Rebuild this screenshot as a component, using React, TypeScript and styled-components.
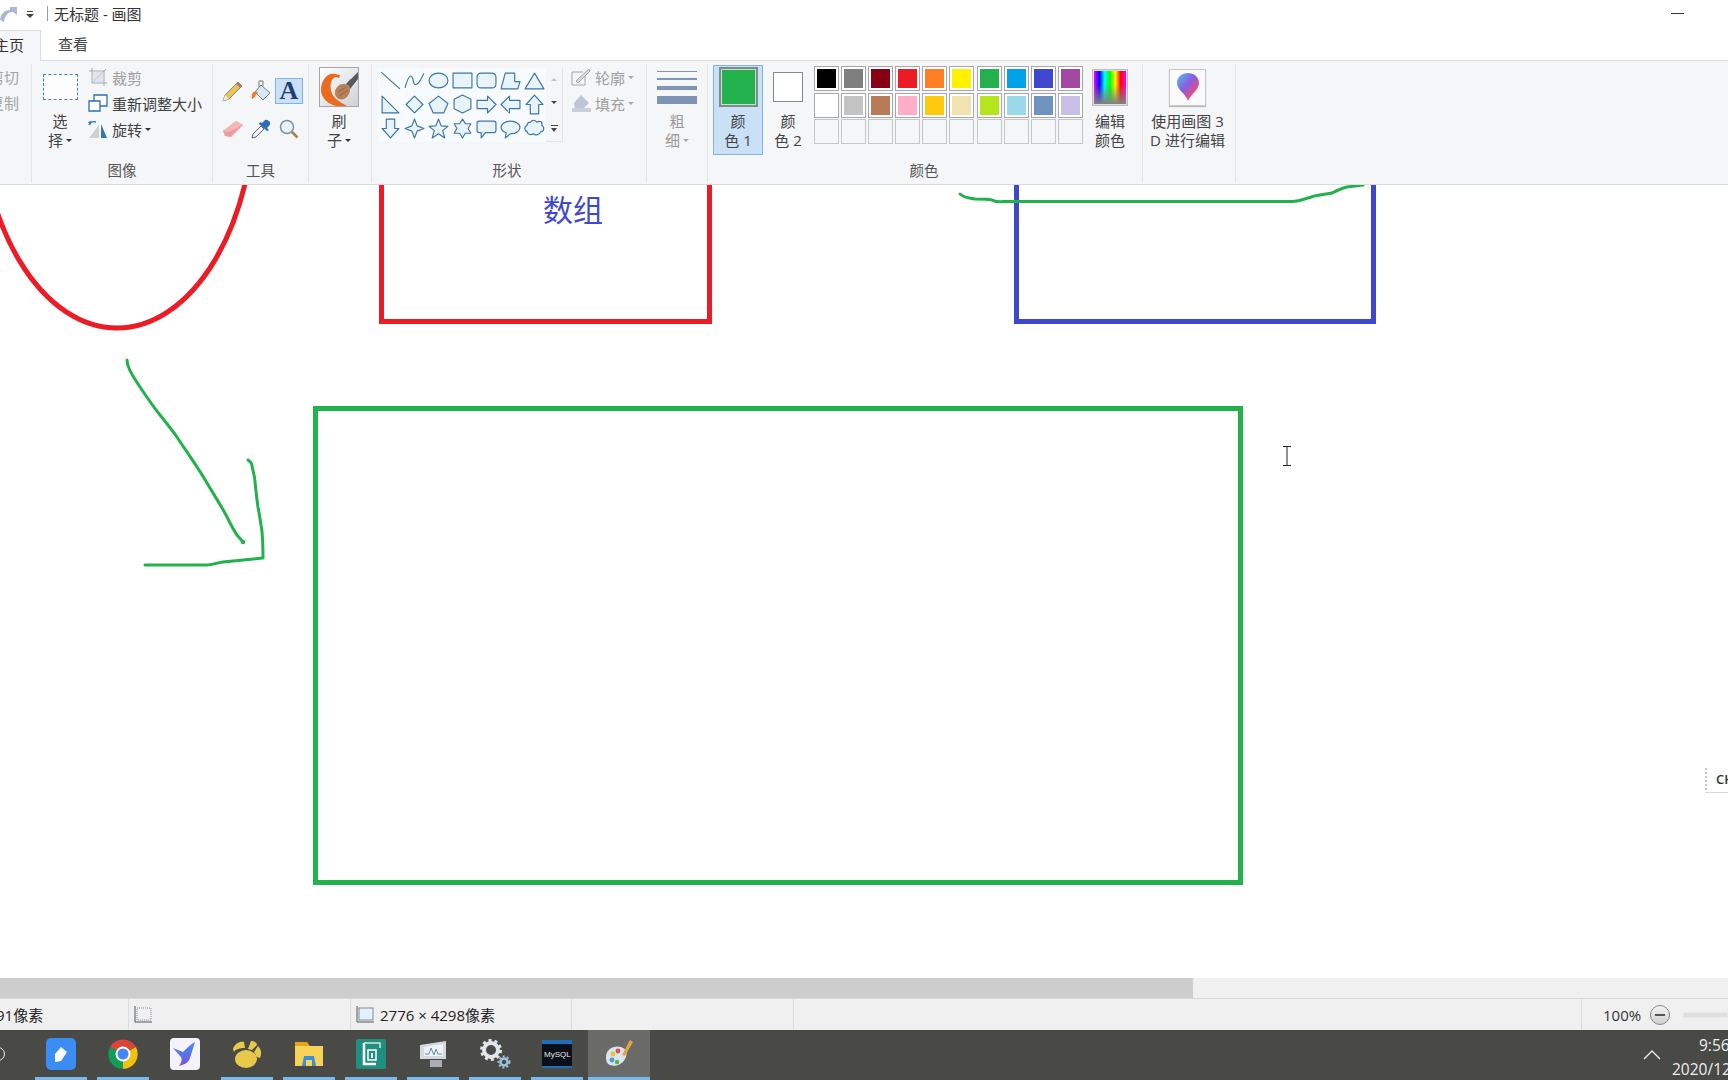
import React from "react";
import styled, { createGlobalStyle } from "styled-components";

const GlobalStyle = createGlobalStyle`
  html, body {
    margin: 0;
    height: 100%;
    overflow: hidden;
    background: #fff;
  }
  body {
    font-family: "Open Sans", "Noto Sans CJK SC", sans-serif;
    font-size: 15px;
    color: #3a3a3a;
  }
`;

const Page = styled.div`
  width: 1728px;
  height: 1080px;
  display: flex;
  flex-direction: column;
  overflow: hidden;
`;

/* title bar */
const TitleBar = styled.div`
  height: 30px;
  flex: none;
  box-sizing: border-box;
  padding-bottom: 3px;
  display: flex;
  align-items: center;
  background: #fff;
`;
const QuickCaret = styled.span`
  width: 0;
  height: 0;
  margin: 5px 13px 0 9px;
  border-left: 4px solid transparent;
  border-right: 4px solid transparent;
  border-top: 4px solid #444;
  position: relative;
  &::before {
    content: "";
    position: absolute;
    left: -3px;
    top: -7px;
    width: 6px;
    height: 1px;
    background: #444;
  }
`;
const TitleDivider = styled.span`
  width: 1px;
  height: 15px;
  background: #9a9a9a;
  margin-right: 6px;
`;
const TitleText = styled.span`
  font-size: 15px;
  color: #333;
`;
const Minimize = styled.span`
  width: 13px;
  height: 1px;
  background: #333;
  margin-left: auto;
  margin-right: 44px;
`;

/* tabs */
const TabRow = styled.div`
  height: 31px;
  flex: none;
  display: flex;
  background: #fff;
  border-bottom: 1px solid #dadbdc;
  box-sizing: border-box;
`;
const HomeTab = styled.div`
  width: 41px;
  height: 31px;
  box-sizing: border-box;
  background: #f5f6f7;
  border-right: 1px solid #dadbdc;
  border-top: 1px solid #dadbdc;
  display: flex;
  justify-content: flex-end;
  align-items: center;
  padding: 0 16px 3px 0;
  white-space: nowrap;
  overflow: hidden;
  color: #333;
`;
const ViewTab = styled.div`
  margin-left: 17px;
  line-height: 28px;
  color: #444;
`;

/* ribbon */
const Ribbon = styled.div`
  height: 124px;
  flex: none;
  display: flex;
  background: #f5f6f7;
  border-bottom: 1px solid #dadbdc;
  box-sizing: border-box;
`;
const Group = styled.section<{ $w: number }>`
  width: ${(p) => p.$w}px;
  flex: none;
  display: flex;
  flex-direction: column;
  box-sizing: border-box;
  border-right: 1px solid #e3e4e6;
  margin: 3px 0 1px;
  overflow: hidden;
`;
const GroupBody = styled.div`
  height: 95px;
  display: flex;
`;
const GroupLabel = styled.div<{ $nudge?: number }>`
  height: 25px;
  line-height: 25px;
  text-align: center;
  color: #555;
  font-size: 14.5px;
  padding-right: ${(p) => p.$nudge || 0}px;
`;

const ClippedColumn = styled.div`
  width: 32px;
  display: flex;
  flex-direction: column;
  align-items: flex-end;
  padding: 0 13px 0 0;
  box-sizing: border-box;
  white-space: nowrap;
  color: #a5a5a5;
`;
const ClippedRow = styled.div`
  height: 26px;
  line-height: 26px;
  flex: none;
`;

const LargeButton = styled.div<{ $w: number; $selected?: boolean; $muted?: boolean; $inset?: number }>`
  width: ${(p) => p.$w}px;
  height: 90px;
  flex: none;
  box-sizing: border-box;
  margin: 1px 0 0 ${(p) => p.$inset || 0}px;
  border: 1px solid ${(p) => (p.$selected ? "#7fb4e6" : "transparent")};
  background: ${(p) => (p.$selected ? "#c9e0f7" : "transparent")};
  color: ${(p) => (p.$muted ? "#9a9a9a" : "#444")};
  display: flex;
  flex-direction: column;
  align-items: center;
`;
const IconArea = styled.div`
  height: 46px;
  padding-bottom: 4px;
  box-sizing: border-box;
  display: flex;
  align-items: center;
  justify-content: center;
`;
const ButtonLine = styled.div`
  height: 19px;
  line-height: 19px;
  white-space: nowrap;
  display: flex;
  align-items: center;
  gap: 3px;
`;
const Caret = styled.span<{ $muted?: boolean }>`
  width: 0;
  height: 0;
  border-left: 3px solid transparent;
  border-right: 3px solid transparent;
  border-top: 3px solid ${(p) => (p.$muted ? "#aaa" : "#333")};
`;
const SelectBox = styled.div`
  width: 35px;
  height: 26px;
  box-sizing: border-box;
  border: 1px dashed #4d7fb5;
  background: #fdfdfd;
`;

const SideList = styled.div`
  display: flex;
  flex-direction: column;
`;
const SideRow = styled.div<{ $muted?: boolean }>`
  height: 26px;
  display: flex;
  align-items: center;
  gap: 3px;
  white-space: nowrap;
  color: ${(p) => (p.$muted ? "#a0a0a0" : "#3f3f3f")};
  svg {
    margin-right: 1px;
  }
`;

const ToolGrid = styled.div`
  display: grid;
  grid-template-columns: repeat(3, 28px);
  grid-template-rows: repeat(2, 26px);
  row-gap: 12px;
  padding: 14px 0 0 6px;
`;
const Tool = styled.div<{ $active?: boolean }>`
  display: flex;
  align-items: center;
  justify-content: center;
  box-sizing: border-box;
  border: 1px solid ${(p) => (p.$active ? "#7fb4e6" : "transparent")};
  background: ${(p) => (p.$active ? "#c9e0f7" : "transparent")};
`;
const TextToolGlyph = styled.span`
  font-family: "Liberation Serif", serif;
  font-weight: 700;
  font-size: 26px;
  line-height: 24px;
  color: #1f3f70;
`;
const BrushFrame = styled.div`
  width: 40px;
  height: 40px;
  box-sizing: border-box;
  border: 1px solid #a6a6a6;
  background: #fff;
  display: flex;
`;

const Gallery = styled.div`
  margin: 4px 0 0 6px;
  width: 168px;
  height: 74px;
  display: grid;
  grid-template-columns: repeat(7, 24px);
  grid-auto-rows: 24px;
  background: #f8fbfe;
`;
const ShapeCell = styled.div`
  display: flex;
  align-items: center;
  justify-content: center;
`;
const GalleryScroll = styled.div`
  width: 17px;
  height: 74px;
  margin-top: 4px;
  box-sizing: border-box;
  border-bottom: 1px solid #e4e4e4;
  border-right: 1px solid #e4e4e4;
  display: flex;
  flex-direction: column;
  align-items: center;
  justify-content: space-around;
`;
const ScrollUp = styled.span`
  width: 0;
  height: 0;
  border-left: 3px solid transparent;
  border-right: 3px solid transparent;
  border-bottom: 3px solid #c4c4c4;
`;
const ScrollDown = styled.span`
  width: 0;
  height: 0;
  border-left: 3px solid transparent;
  border-right: 3px solid transparent;
  border-top: 3px solid #444;
`;
const ScrollMore = styled.span`
  width: 7px;
  height: 5px;
  border-top: 1px solid #444;
  position: relative;
  &::after {
    content: "";
    position: absolute;
    left: 0;
    top: 2px;
    border-left: 3.5px solid transparent;
    border-right: 3.5px solid transparent;
    border-top: 4px solid #444;
  }
`;
const ShapeOptions = styled.div`
  padding: 0 0 0 8px;
  display: flex;
  flex-direction: column;
`;

const SizeBars = styled.div`
  width: 40px;
  display: flex;
  flex-direction: column;
  gap: 6px;
`;
const SizeBar = styled.div<{ $h: number }>`
  height: ${(p) => p.$h}px;
  background: #7f94b5;
`;

const Swatch = styled.div<{ $large?: boolean; $color: string }>`
  width: ${(p) => (p.$large ? 39 : 30)}px;
  height: ${(p) => (p.$large ? 40 : 30)}px;
  box-sizing: border-box;
  border: ${(p) => (p.$large ? 2 : 1)}px solid #7f8c8c;
  background: ${(p) => p.$color};
  box-shadow: inset 0 0 0 1px ${(p) => (p.$large ? "#c9dccb" : "#fff")};
`;
const Palette = styled.div`
  margin: 2px 0 0 1px;
  display: grid;
  grid-template-columns: repeat(10, 27.1px);
  grid-auto-rows: 26.6px;
`;
const PaletteCell = styled.div<{ $color?: string }>`
  width: 25px;
  height: 25px;
  box-sizing: border-box;
  border: 1px solid ${(p) => (p.$color ? "#a8a8a8" : "#c6c6c6")};
  background: ${(p) => p.$color || "transparent"};
  box-shadow: ${(p) => (p.$color ? "inset 0 0 0 2px #fff" : "none")};
`;
const Spectrum = styled.div`
  width: 36px;
  height: 37px;
  box-sizing: border-box;
  border: 2px solid #dedede;
  outline: 1px solid #bdbdbd;
  outline-offset: -1px;
  background:
    linear-gradient(to bottom, rgba(128, 128, 128, 0) 40%, rgba(128, 128, 128, 1)),
    linear-gradient(to right, #f0f, #00f, #0ff, #0f0, #ff0, #f00, #f0f);
`;
const Paint3DFrame = styled.div`
  width: 37px;
  height: 37px;
  box-sizing: border-box;
  border: 1px solid #c8c8c8;
  box-shadow: 0 1px 1px #bbb;
  background: #fafafa;
  display: flex;
  align-items: center;
  justify-content: center;
`;

/* canvas */
const Canvas = styled.main`
  position: relative;
  flex: 1;
  background: #fff;
  overflow: hidden;
`;
const Drawing = styled.svg`
  display: block;
`;
const CanvasText = styled.div`
  position: absolute;
  left: 543px;
  top: 1px;
  font-family: "Noto Sans CJK SC", sans-serif;
  font-size: 30px;
  line-height: 44px;
  color: #3f48cc;
`;
const ImeBar = styled.div`
  position: absolute;
  right: 0;
  top: 580px;
  width: 23px;
  height: 27px;
  border-bottom: 1px solid #d8d8d8;
  background: #fff;
  display: flex;
  align-items: center;
  gap: 9px;
  overflow: hidden;
`;
const ImeGrip = styled.span`
  flex: none;
  width: 0;
  height: 22px;
  border-left: 2px dotted #c4c4c4;
`;
const ImeText = styled.span`
  font-size: 13px;
  font-weight: 600;
  color: #333;
`;
const Cursor = styled.svg`
  position: absolute;
  left: 1282px;
  top: 261px;
`;

const HScroll = styled.div`
  height: 20px;
  flex: none;
  background: #f0f0f0;
`;
const HThumb = styled.div`
  width: 1193px;
  height: 100%;
  background: #cdcdcd;
`;

/* status bar */
const StatusBar = styled.footer`
  height: 32px;
  flex: none;
  box-sizing: border-box;
  border-top: 1px solid #d9d9d9;
  background: #f0f0f0;
  display: flex;
  color: #222;
`;
const StatusCell = styled.div<{ $w: number }>`
  width: ${(p) => p.$w}px;
  flex: none;
  box-sizing: border-box;
  border-right: 1px solid #dcdcdc;
  display: flex;
  align-items: center;
  gap: 5px;
  padding-left: 4px;
  white-space: nowrap;
  overflow: hidden;
`;
const ClippedStatus = styled.span`
  margin-left: -8px;
`;
const ZoomArea = styled.div`
  flex: 1;
  display: flex;
  align-items: center;
  padding-left: 21px;
  color: #333;
`;
const ZoomButton = styled.span`
  width: 20px;
  height: 20px;
  box-sizing: border-box;
  margin-left: 9px;
  border: 1px solid #8a8a8a;
  border-radius: 50%;
  background: linear-gradient(#f4f4f4, #cfcfcf);
  display: flex;
  align-items: center;
  justify-content: center;
  &::before {
    content: "";
    width: 10px;
    height: 2px;
    background: #555;
  }
`;
const ZoomTrack = styled.span`
  flex: 1;
  height: 4px;
  margin-left: 13px;
  background: #dfdfdf;
  border: 1px solid #e8e8e8;
`;

/* taskbar */
const Taskbar = styled.nav`
  height: 50px;
  flex: none;
  display: flex;
  align-items: stretch;
  background: #494946;
  color: #eee;
`;
const SearchRing = styled.span`
  width: 14px;
  height: 14px;
  margin: 17px 25px 0 -9px;
  box-sizing: border-box;
  border: 1.5px solid #eee;
  border-radius: 50%;
`;
const TaskItem = styled.div<{ $running?: boolean; $active?: boolean }>`
  width: 62px;
  flex: none;
  box-sizing: border-box;
  padding-bottom: 3px;
  display: flex;
  align-items: center;
  justify-content: center;
  background: ${(p) => (p.$active ? "#6a6a68" : "transparent")};
  position: relative;
  &::after {
    content: "";
    display: ${(p) => (p.$running ? "block" : "none")};
    position: absolute;
    bottom: 0;
    left: ${(p) => (p.$active ? 0 : 5)}px;
    right: ${(p) => (p.$active ? 0 : 5)}px;
    height: 3px;
    background: #76b9ed;
  }
`;
const TrayChevron = styled.svg`
  margin: 0 11px 0 auto;
  align-self: center;
`;
const Clock = styled.div`
  width: 56px;
  flex: none;
  padding-top: 3px;
  font-size: 15.5px;
  line-height: 24px;
  white-space: nowrap;
`;
const ClockTime = styled.div`
  padding-left: 27px;
`;

const SHAPES = [
  "M1 2L19 18",
  "M1 17C5 2 8 4 9 11C10 17 14 14 19 3",
  "M1 10C1 6 5 3 10 3S19 6 19 10S15 17 10 17S1 14 1 10Z",
  "M1 3H19V17H1Z",
  "M5 3H15Q19 3 19 7V13Q19 17 15 17H5Q1 17 1 13V7Q1 3 5 3Z",
  "M5 3H14V11H19L17 18H1Z",
  "M10 3L19 18H1Z",
  "M2 2V18H18Z",
  "M10 2L18 10L10 18L2 10Z",
  "M10 2L19 9L15 18H5L1 9Z",
  "M10 1L18 5V14L10 18L2 14V5Z",
  "M1 6H11V2L19 10L11 18V14H1Z",
  "M19 6H9V2L1 10L9 18V14H19Z",
  "M10 1L18 10H14V19H6V10H2Z",
  "M6 1H14V10H18L10 19L2 10H6Z",
  "M10 1L12.5 7.5L19 10L12.5 12.5L10 19L7.5 12.5L1 10L7.5 7.5Z",
  "M10 1L12.5 7.5L19 8L14 12L16 19L10 15L4 19L6 12L1 8L7.5 7.5Z",
  "M10 1L12.7 5.5L18 5.5L15.3 10L18 14.5L12.7 14.5L10 19L7.3 14.5L2 14.5L4.7 10L2 5.5L7.3 5.5Z",
  "M3 3H17Q19 3 19 5V12Q19 14 17 14H9L5 19V14H3Q1 14 1 12V5Q1 3 3 3Z",
  "M10 3C15 3 19 5.5 19 9S15 15 10 15L5 19L6 14C3 13 1 11 1 9C1 5.5 5 3 10 3Z",
  "M6 4C8 1 11 2 12 4C15 2 18 4 17 7C20 9 19 13 16 13C15 16 11 17 9 15C6 17 3 15 3 13C0 12 0 8 3 7C3 5 4 4 6 4Z",
];

const PALETTE = [
  "#000000", "#7f7f7f", "#880015", "#ed1c24", "#ff7f27", "#fff200", "#22b14c", "#00a2e8", "#3f48cc", "#a349a4",
  "#ffffff", "#c3c3c3", "#b97a57", "#ffaec9", "#ffc90e", "#efe4b0", "#b5e61d", "#99d9ea", "#7092be", "#c8bfe7",
];

const RedoIcon = () => (
  <svg width="17" height="18" viewBox="0 0 17 18">
    <path d="M0 15C1 8 5 5 10 5V2L17 2V10L13 7C8 7 5 10 4 17Z" fill="#aab8d0" />
  </svg>
);
const CropIcon = () => (
  <svg width="20" height="20" viewBox="0 0 20 20" fill="none" stroke="#a6a6b4">
    <path d="M4 1V16H19M1 4H16V19" />
    <path d="M5 15L18 2" />
    <path d="M5 5H15V15H5Z" fill="#d9dbe6" stroke="none" opacity="0.7" />
  </svg>
);
const ResizeIcon = () => (
  <svg width="20" height="18" viewBox="0 0 20 18" fill="#fff" stroke="#2f6fb0" strokeWidth="1.3">
    <path d="M6 1H19V12H6Z" />
    <path d="M1 7H12V17H1Z" />
  </svg>
);
const RotateIcon = () => (
  <svg width="20" height="20" viewBox="0 0 20 20">
    <path d="M11 6V19H1Z" fill="#d0d0d0" />
    <path d="M13 5L19 19H13Z" fill="#2f78b8" />
    <path d="M1 6C2 3 5 2 8 3" fill="none" stroke="#2f78b8" strokeWidth="1.4" />
    <path d="M0 3L3 2L3 6Z" fill="#2f78b8" />
  </svg>
);
const PencilIcon = () => (
  <svg width="22" height="22" viewBox="0 0 22 22">
    <path d="M1 21L3 15L16 2L20 6L7 19Z" fill="#e9c65a" stroke="#77705a" strokeWidth="0.8" />
    <path d="M1 21L3 15L7 19Z" fill="#f2e6cf" />
    <path d="M16 2L20 6L18 8L14 4Z" fill="#a98078" />
  </svg>
);
const FillIcon = () => (
  <svg width="22" height="22" viewBox="0 0 22 22">
    <path d="M11 5L20 13L13 20L5 12Z" fill="#d9e6f4" stroke="#6a7f9a" />
    <path d="M6 11C2 12 1 15 2 19C4 19 5 15 8 13Z" fill="#f0792a" />
    <path d="M9 7V1H13V6" fill="none" stroke="#777" />
  </svg>
);
const EraserIcon = () => (
  <svg width="22" height="20" viewBox="0 0 22 20">
    <path d="M1 12L14 2L21 6L9 18L3 17Z" fill="#ee9a9e" />
    <path d="M1 12L14 2L21 6L7 13Z" fill="#f4b6b8" />
  </svg>
);
const DropperIcon = () => (
  <svg width="22" height="22" viewBox="0 0 22 22">
    <path d="M2 20L3 16L11 8L14 11L6 19Z" fill="#eef" stroke="#667" />
    <path d="M12 5L15 2Q17 1 20 4Q21 6 19 8L17 10L19 12L17 13L9 6L10 4Z" fill="#2a6fb0" />
  </svg>
);
const MagnifierIcon = () => (
  <svg width="20" height="20" viewBox="0 0 20 20" fill="none">
    <circle cx="8" cy="8" r="6.5" fill="#eaf3fb" stroke="#8a8f98" strokeWidth="1.5" />
    <path d="M13 13L18.5 18.5" stroke="#9a8560" strokeWidth="2.5" />
  </svg>
);
const BrushIcon = () => (
  <svg width="38" height="38" viewBox="0 0 38 38">
    <defs>
      <linearGradient id="brushBack" x1="0" y1="0" x2="1" y2="1">
        <stop offset="0" stopColor="#ffffff" />
        <stop offset="1" stopColor="#cfd2d4" />
      </linearGradient>
    </defs>
    <rect width="38" height="38" fill="url(#brushBack)" />
    <path d="M38 3L26 16L30 21L38 11Z" fill="#555a60" />
    <path d="M38 0L29 10L31 11L38 4Z" fill="#e8e8e8" />
    <path d="M15 6C8 4 1 12 1 22C1 30 8 36 16 38H27C20 34 12 30 11 22C10 15 11 11 16 9L19 10L20 7Z" fill="#ea6a20" />
    <path d="M15 23C17 17 23 14 28 17C32 20 30 28 24 31C19 33 14 29 15 23Z" fill="#b5835a" />
    <path d="M18 24L26 19M19 28L28 22" stroke="#8f6240" strokeWidth="1" />
  </svg>
);
const OutlineIcon = () => (
  <svg width="20" height="20" viewBox="0 0 20 20" fill="none" stroke="#a0a6b0">
    <path d="M1 5H12M1 5V18H14V9" />
    <path d="M5 14L18 2L19 4L7 16Z" fill="#d8dbe0" />
  </svg>
);
const FillOptionIcon = () => (
  <svg width="20" height="20" viewBox="0 0 20 20">
    <path d="M10 2L18 10L12 16H4L3 10Z" fill="#bcc6d6" />
    <rect x="1" y="15" width="19" height="4" fill="#c9d0dc" />
  </svg>
);
const Paint3DIcon = () => (
  <svg width="24" height="30" viewBox="0 0 24 30">
    <defs>
      <linearGradient id="paint3d" x1="0" y1="0" x2="1" y2="1">
        <stop offset="0" stopColor="#4fc3e8" />
        <stop offset="0.45" stopColor="#8a5ce0" />
        <stop offset="0.75" stopColor="#ec4f7c" />
        <stop offset="1" stopColor="#f6b02c" />
      </linearGradient>
    </defs>
    <path d="M12 1C18 1 23 5 23 11C23 18 15 22 12 29C10 22 1 18 1 11C1 5 6 1 12 1Z" fill="url(#paint3d)" />
  </svg>
);
const SelectionIcon = ({ filled }: { filled?: boolean }) => (
  <svg width="20" height="20" viewBox="0 0 20 20" fill="none">
    <path d="M2 1V17H19" stroke="#555" />
    <rect x="4" y="3" width="14" height="12" fill={filled ? "#e4f0fa" : "none"} stroke="#7a8aa0" strokeDasharray={filled ? undefined : "1 1"} />
  </svg>
);

const NoteIcon = () => (
  <svg width="30" height="32" viewBox="0 0 30 32">
    <rect width="30" height="32" rx="5" fill="#3b8cf5" />
    <path d="M9 24V16L15 9L21 14L15 23Z" fill="#fff" />
  </svg>
);
const ChromeIcon = () => (
  <svg width="30" height="30" viewBox="0 0 30 30">
    <path d="M15 15L2 8A15 15 0 0 1 28 8Z" fill="#db4437" />
    <path d="M15 15L28 8A15 15 0 0 1 15 30Z" fill="#f4c20d" />
    <path d="M15 15L15 30A15 15 0 0 1 2 8Z" fill="#0f9d58" />
    <circle cx="15" cy="15" r="7.5" fill="#fff" />
    <circle cx="15" cy="15" r="5.5" fill="#4285f4" />
  </svg>
);
const BirdIcon = () => (
  <svg width="30" height="32" viewBox="0 0 30 32">
    <defs>
      <linearGradient id="bird" x1="0" y1="0" x2="0" y2="1">
        <stop offset="0" stopColor="#3f8fe8" />
        <stop offset="1" stopColor="#7a54e0" />
      </linearGradient>
    </defs>
    <rect width="30" height="32" rx="4" fill="#f4f3fb" />
    <path d="M25 4L20 20C18 26 12 27 9 28C12 24 12 21 11 19L3 10L13 14C17 10 21 6 25 4Z" fill="url(#bird)" />
  </svg>
);
const PetalIcon = () => (
  <svg width="30" height="28" viewBox="0 0 30 28" fill="#e8c84a">
    <ellipse cx="14" cy="19" rx="11" ry="9" />
    <path d="M1 9C3 3 8 1 12 2L13 8C8 8 4 9 2 12Z" />
    <path d="M16 9L19 1C23 1 25 3 25 5L20 10Z" />
    <path d="M22 12L26 6C29 9 30 13 28 18L25 17Z" />
  </svg>
);
const FolderIcon = () => (
  <svg width="28" height="24" viewBox="0 0 28 24">
    <path d="M0 0H12L15 4H0Z" fill="#e5a41c" />
    <rect y="4" width="28" height="20" fill="#f7d358" />
    <path d="M7 24L9 14H19L21 24H17V18H11V24Z" fill="#3a8fd8" />
  </svg>
);
const ReaderIcon = () => (
  <svg width="30" height="30" viewBox="0 0 30 30" fill="none">
    <rect width="30" height="30" rx="2" fill="#1f8f80" />
    <path d="M8 4V25H20" stroke="#fff" strokeWidth="2.5" />
    <path d="M8 4H24V9" stroke="#cfe8e4" strokeWidth="1.5" />
    <path d="M12 11H20V21H12Z" stroke="#fff" strokeWidth="1.5" />
    <path d="M16 14V19" stroke="#fff" strokeWidth="2" />
  </svg>
);
const MonitorIcon = () => (
  <svg width="30" height="26" viewBox="0 0 30 26">
    <path d="M2 4L28 0V18L2 18Z" fill="#d5d9de" />
    <path d="M6 6L25 3V15H6Z" fill="#eef3f7" />
    <path d="M7 13L11 13L13 7L16 14L18 8L20 13H24" fill="none" stroke="#6a8ab0" />
    <rect x="12" y="19" width="12" height="7" fill="#a8adb3" />
  </svg>
);
const GearsIcon = () => (
  <svg width="32" height="32" viewBox="0 0 32 32" fill="none">
    <circle cx="12" cy="12" r="7" stroke="#e2e6ea" strokeWidth="4" />
    <circle cx="12" cy="12" r="9.5" stroke="#e2e6ea" strokeWidth="3" strokeDasharray="3 3" />
    <circle cx="25" cy="24" r="3.5" stroke="#9cc2de" strokeWidth="2.5" />
    <circle cx="25" cy="24" r="5.5" stroke="#9cc2de" strokeWidth="2" strokeDasharray="2 2" />
  </svg>
);
const MysqlIcon = () => (
  <svg width="30" height="28" viewBox="0 0 30 28">
    <rect width="30" height="28" fill="#0a0f1a" />
    <rect width="30" height="4" fill="#1f6fb8" />
    <text x="2" y="17" fontSize="8" fill="#e8e8e8" fontFamily="Liberation Sans, sans-serif">MySQL</text>
    <rect y="26" width="30" height="2" fill="#1f6fb8" />
  </svg>
);
const PaletteIcon = () => (
  <svg width="32" height="32" viewBox="0 0 32 32">
    <path d="M3 19C3 11 11 7 18 9C24 11 25 16 22 21C19 27 12 29 7 27C4 26 3 23 3 19Z" fill="#d8e4ee" />
    <circle cx="10" cy="16" r="2.4" fill="#e8c33c" />
    <circle cx="15" cy="13" r="2.4" fill="#d8504a" />
    <circle cx="9" cy="22" r="2.4" fill="#4a9ad8" />
    <circle cx="14" cy="24" r="2.2" fill="#5bb050" />
    <path d="M27 2L30 4L22 18L19 17Z" fill="#e2a43c" />
  </svg>
);

const Shape = ({ d }: { d: string }) => (
  <svg width="21" height="21" viewBox="0 0 20 20">
    <path d={d} fill={d === SHAPES[0] || d === SHAPES[1] ? "none" : "#e8f3fa"} stroke="#3c76a4" strokeWidth="1.1" strokeLinejoin="round" />
  </svg>
);

const TwoLine = ({ a, b, caret, muted }: { a: string; b: string; caret?: boolean; muted?: boolean }) => (
  <>
    <ButtonLine>{a}</ButtonLine>
    <ButtonLine>
      {b}
      {caret && <Caret $muted={muted} />}
    </ButtonLine>
  </>
);

const App: React.FC = () => {
  return (
    <Page>
      <GlobalStyle />
      <TitleBar>
        <RedoIcon />
        <QuickCaret />
        <TitleDivider />
        <TitleText>无标题 - 画图</TitleText>
        <Minimize />
      </TitleBar>
      <TabRow>
        <HomeTab>主页</HomeTab>
        <ViewTab>查看</ViewTab>
      </TabRow>

      <Ribbon>
        <Group $w={32}>
          <GroupBody>
            <ClippedColumn>
              <ClippedRow>剪切</ClippedRow>
              <ClippedRow>复制</ClippedRow>
            </ClippedColumn>
          </GroupBody>
        </Group>

        <Group $w={181}>
          <GroupBody>
            <LargeButton $w={56}>
              <IconArea>
                <SelectBox />
              </IconArea>
              <TwoLine a="选" b="择" caret />
            </LargeButton>
            <SideList>
              <SideRow $muted>
                <CropIcon />
                裁剪
              </SideRow>
              <SideRow>
                <ResizeIcon />
                重新调整大小
              </SideRow>
              <SideRow>
                <RotateIcon />
                旋转
                <Caret />
              </SideRow>
            </SideList>
          </GroupBody>
          <GroupLabel>图像</GroupLabel>
        </Group>

        <Group $w={96}>
          <GroupBody>
            <ToolGrid>
              <Tool><PencilIcon /></Tool>
              <Tool><FillIcon /></Tool>
              <Tool $active><TextToolGlyph>A</TextToolGlyph></Tool>
              <Tool><EraserIcon /></Tool>
              <Tool><DropperIcon /></Tool>
              <Tool><MagnifierIcon /></Tool>
            </ToolGrid>
          </GroupBody>
          <GroupLabel>工具</GroupLabel>
        </Group>

        <Group $w={63}>
          <GroupBody>
            <LargeButton $w={60}>
              <IconArea>
                <BrushFrame>
                  <BrushIcon />
                </BrushFrame>
              </IconArea>
              <TwoLine a="刷" b="子" caret />
            </LargeButton>
          </GroupBody>
        </Group>

        <Group $w={275}>
          <GroupBody>
            <Gallery>
              {SHAPES.map((d) => (
                <ShapeCell key={d}>
                  <Shape d={d} />
                </ShapeCell>
              ))}
            </Gallery>
            <GalleryScroll>
              <ScrollUp />
              <ScrollDown />
              <ScrollMore />
            </GalleryScroll>
            <ShapeOptions>
              <SideRow $muted>
                <OutlineIcon />
                轮廓
                <Caret $muted />
              </SideRow>
              <SideRow $muted>
                <FillOptionIcon />
                填充
                <Caret $muted />
              </SideRow>
            </ShapeOptions>
          </GroupBody>
          <GroupLabel $nudge={4}>形状</GroupLabel>
        </Group>

        <Group $w={61}>
          <GroupBody>
            <LargeButton $w={60} $muted>
              <IconArea>
                <SizeBars>
                  <SizeBar $h={1} />
                  <SizeBar $h={2} />
                  <SizeBar $h={4} />
                  <SizeBar $h={8} />
                </SizeBars>
              </IconArea>
              <TwoLine a="粗" b="细" caret muted />
            </LargeButton>
          </GroupBody>
        </Group>

        <Group $w={435}>
          <GroupBody>
            <LargeButton $w={50} $selected $inset={5}>
              <IconArea>
                <Swatch $large $color="#22b14c" />
              </IconArea>
              <TwoLine a="颜" b="色 1" />
            </LargeButton>
            <LargeButton $w={50}>
              <IconArea>
                <Swatch $color="#ffffff" />
              </IconArea>
              <TwoLine a="颜" b="色 2" />
            </LargeButton>
            <Palette>
              {PALETTE.map((c) => (
                <PaletteCell key={c} $color={c} />
              ))}
              {Array.from({ length: 10 }, (_, i) => (
                <PaletteCell key={i} />
              ))}
            </Palette>
            <LargeButton $w={50}>
              <IconArea>
                <Spectrum />
              </IconArea>
              <TwoLine a="编辑" b="颜色" />
            </LargeButton>
          </GroupBody>
          <GroupLabel $nudge={2}>颜色</GroupLabel>
        </Group>

        <Group $w={93}>
          <GroupBody>
            <LargeButton $w={89}>
              <IconArea>
                <Paint3DFrame>
                  <Paint3DIcon />
                </Paint3DFrame>
              </IconArea>
              <TwoLine a="使用画图 3" b="D 进行编辑" />
            </LargeButton>
          </GroupBody>
        </Group>
      </Ribbon>

      <Canvas>
        <Drawing width="1728" height="793" viewBox="0 185 1728 793" fill="none" strokeLinecap="round" strokeLinejoin="round">
          <ellipse cx="117" cy="98" rx="138" ry="230" stroke="#ed1c24" strokeWidth="5" />
          <path d="M381.5 170V321.5H709.5V170" stroke="#ed1c24" strokeWidth="5" strokeLinecap="butt" strokeLinejoin="miter" />
          <path d="M1016.5 170V321.5H1373.5V170" stroke="#3f48cc" strokeWidth="5" strokeLinecap="butt" strokeLinejoin="miter" />
          <rect x="315.5" y="408.5" width="925" height="474" stroke="#22b14c" strokeWidth="5" strokeLinejoin="miter" />
          <path
            d="M960 194C964 198 970 198 975 199C982 199 988 199 992 200C995 202 998 202 1003 201.5H1293C1300 201 1304 199 1310 197.5C1316 195 1322 195 1332 193C1338 190 1342 188 1347 187L1363 185"
            stroke="#22b14c"
            strokeWidth="3"
          />
          <path
            d="M127 360C127 366 130 372 140 387C148 399 152 405 160 415C168 425 172 430 177 437C188 454 197 466 207 483C214 495 222 507 227 517C231 525 234 531 237 535L243 542"
            stroke="#22b14c"
            strokeWidth="3"
          />
          <circle cx="243" cy="542" r="2.2" fill="#22b14c" />
          <path
            d="M248 460C251 462 252 464 252 466C253 472 255 476 255 482C256 492 257 500 258 507C260 518 261 524 262 532C263 542 263 550 263 558L223 562C216 563 212 565 207 565H145"
            stroke="#22b14c"
            strokeWidth="3"
          />
        </Drawing>
        <CanvasText>数组</CanvasText>
        <ImeBar>
          <ImeGrip />
          <ImeText>CH</ImeText>
        </ImeBar>
        <Cursor width="10" height="20" viewBox="0 0 10 20" fill="none" stroke="#222">
          <path d="M1 .5H9M5 .5V19.5M1 19.5H9" />
        </Cursor>
      </Canvas>

      <HScroll>
        <HThumb />
      </HScroll>

      <StatusBar>
        <StatusCell $w={129}>
          <ClippedStatus>91像素</ClippedStatus>
        </StatusCell>
        <StatusCell $w={222}>
          <SelectionIcon />
        </StatusCell>
        <StatusCell $w={221}>
          <SelectionIcon filled />
          2776 × 4298像素
        </StatusCell>
        <StatusCell $w={222} />
        <StatusCell $w={788} />
        <ZoomArea>
          100%
          <ZoomButton />
          <ZoomTrack />
        </ZoomArea>
      </StatusBar>

      <Taskbar>
        <SearchRing />
        <TaskItem $running><NoteIcon /></TaskItem>
        <TaskItem $running><ChromeIcon /></TaskItem>
        <TaskItem><BirdIcon /></TaskItem>
        <TaskItem $running><PetalIcon /></TaskItem>
        <TaskItem $running><FolderIcon /></TaskItem>
        <TaskItem $running><ReaderIcon /></TaskItem>
        <TaskItem $running><MonitorIcon /></TaskItem>
        <TaskItem $running><GearsIcon /></TaskItem>
        <TaskItem $running><MysqlIcon /></TaskItem>
        <TaskItem $running $active><PaletteIcon /></TaskItem>
        <TrayChevron width="18" height="10" viewBox="0 0 18 10" fill="none" stroke="#eee" strokeWidth="1.3">
          <path d="M1 9L9 1L17 9" />
        </TrayChevron>
        <Clock>
          <ClockTime>9:56</ClockTime>
          2020/12
        </Clock>
      </Taskbar>
    </Page>
  );
};

export default App;
